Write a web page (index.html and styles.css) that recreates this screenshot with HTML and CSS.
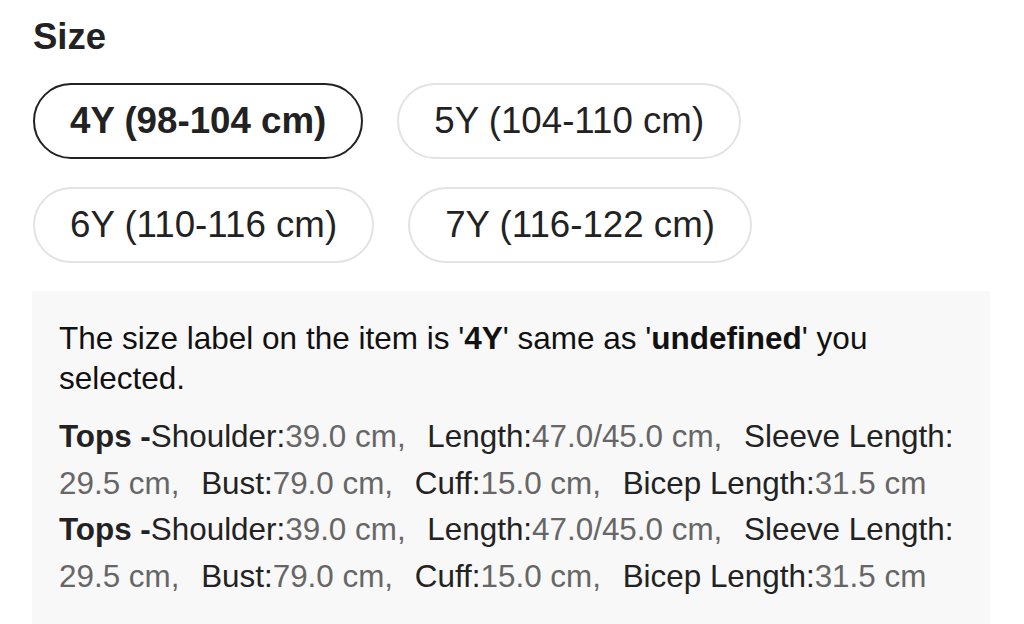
FILE: index.html
```html
<!DOCTYPE html>
<html>
<head>
<meta charset="utf-8">
<link rel="stylesheet" href="styles.css">
</head>
<body>
<div class="page">
  <h2 class="title">Size</h2>
  <div class="sizes">
    <button class="size selected">4Y (98-104 cm)</button>
    <button class="size">5Y (104-110 cm)</button>
    <button class="size">6Y (110-116 cm)</button>
    <button class="size">7Y (116-122 cm)</button>
  </div>
  <div class="info">
    <p class="note">The size label on the item is '<b>4Y</b>' same as '<b>undefined</b>' you selected.</p>
    <p class="measure"><b>Tops -</b><span class="lbl">Shoulder:</span><wbr><span class="val">39.0 cm,</span> <span class="lbl">Length:</span><wbr><span class="val">47.0/45.0 cm,</span> <span class="lbl">Sleeve Length:</span><wbr><span class="val">29.5 cm,</span> <span class="lbl">Bust:</span><wbr><span class="val">79.0 cm,</span> <span class="lbl">Cuff:</span><wbr><span class="val">15.0 cm,</span> <span class="lbl">Bicep Length:</span><wbr><span class="val last">31.5 cm</span></p>
    <p class="measure"><b>Tops -</b><span class="lbl">Shoulder:</span><wbr><span class="val">39.0 cm,</span> <span class="lbl">Length:</span><wbr><span class="val">47.0/45.0 cm,</span> <span class="lbl">Sleeve Length:</span><wbr><span class="val">29.5 cm,</span> <span class="lbl">Bust:</span><wbr><span class="val">79.0 cm,</span> <span class="lbl">Cuff:</span><wbr><span class="val">15.0 cm,</span> <span class="lbl">Bicep Length:</span><wbr><span class="val last">31.5 cm</span></p>
  </div>
</div>
</body>
</html>
```
FILE: styles.css
```css
html, body {
  margin: 0;
  padding: 0;
  background: #fff;
}
body {
  font-family: "Liberation Sans", Arial, Helvetica, sans-serif;
  color: #222;
}
.page {
  padding: 16px 33px 0 33px;
}
.title {
  margin: 0;
  font-size: 36.5px;
  font-weight: bold;
  line-height: 42px;
  color: #222;
}
.sizes {
  display: flex;
  flex-wrap: wrap;
  column-gap: 34px;
  row-gap: 28px;
  margin-top: 25px;
  width: 780px;
}
.size {
  font-family: inherit;
  font-size: 36.7px;
  color: #222;
  background: #fff;
  border: 2px solid #e3e3e3;
  border-radius: 40px;
  height: 76px;
  padding: 0 35px;
  line-height: 72px;
  white-space: nowrap;
}
.size.selected {
  border-color: #222;
  font-weight: bold;
}
.info {
  margin-top: 28px;
  width: 958px;
  box-sizing: border-box;
  background: #f8f8f8;
  padding: 27px 6px 30px 27px;
  margin-left: -1px;
}
.note {
  margin: 0 0 16px 0;
  font-size: 31.5px;
  line-height: 40px;
  color: #111;
  padding-right: 20px;
}
.measure {
  margin: 0;
  font-size: 31.4px;
  line-height: 46.5px;
  color: #222;
}
.lbl {
  white-space: nowrap;
}
.val {
  color: #666;
  margin-right: 13px;
  white-space: nowrap;
}
.val.last {
  margin-right: 0;
}
```
